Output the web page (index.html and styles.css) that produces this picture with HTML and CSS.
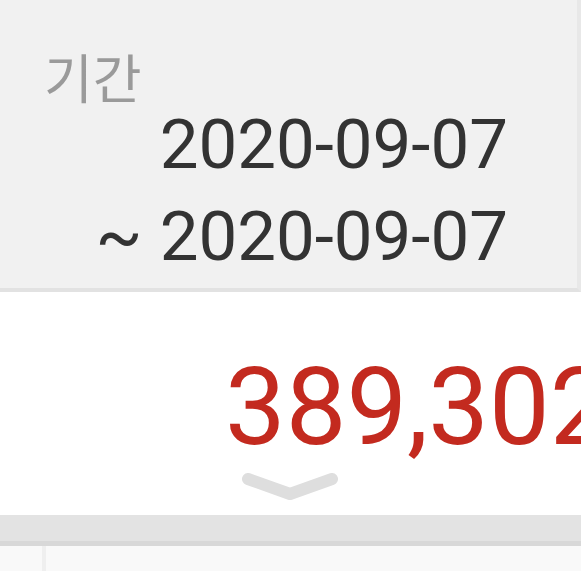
FILE: index.html
```html
<!DOCTYPE html>
<html lang="ko">
<head>
<meta charset="utf-8">
<link rel="stylesheet" href="styles.css">
</head>
<body>
<div class="screen">
  <section class="period">
    <div class="label">기간</div>
    <div class="dates">
      <div class="date">2020-09-07</div>
      <div class="date">~ 2020-09-07</div>
    </div>
  </section>
  <section class="amount">
    <div class="value">389,302원</div>
    <svg class="chevron" width="96" height="28" viewBox="0 0 96 28">
      <path d="M6 6 L48 21 L90 6" fill="none" stroke="#dedede" stroke-width="12" stroke-linecap="round" stroke-linejoin="round"/>
    </svg>
  </section>
  <div class="band"></div>
  <div class="list">
    <div class="list-side"></div>
    <div class="list-main"></div>
  </div>
</div>
</body>
</html>
```
FILE: styles.css
```css
html, body {
  margin: 0;
  padding: 0;
  background: #ffffff;
}
.screen {
  width: 581px;
  height: 571px;
  overflow: hidden;
  display: flex;
  flex-direction: column;
  font-family: Roboto, "Noto Sans CJK KR", sans-serif;
}
.period {
  box-sizing: border-box;
  height: 292px;
  flex: none;
  background: #f1f1f1;
  border-bottom: 4px solid #e2e2e2;
  border-right: 4px solid #e8e8e8;
  padding: 46px 69px 0 44px;
  display: flex;
  flex-direction: column;
}
.label {
  font-family: "Noto Sans CJK KR", sans-serif;
  font-size: 53px;
  line-height: 60px;
  color: #9a9a9a;
}
.dates {
  align-self: flex-end;
  text-align: right;
  margin-top: -7px;
}
.date {
  font-size: 69px;
  line-height: 92px;
  color: #333333;
  white-space: nowrap;
}
.amount {
  box-sizing: border-box;
  height: 223px;
  flex: none;
  background: #ffffff;
  padding: 50px 0 0 225px;
}
.value {
  font-size: 108px;
  line-height: 130px;
  color: #c32a1f;
  white-space: nowrap;
}
.chevron {
  display: block;
  margin: 1px 0 0 17px;
}
.band {
  box-sizing: border-box;
  flex: none;
  height: 31px;
  background: #e3e3e3;
  border-bottom: 5px solid #d8d8d8;
}
.list {
  flex: 1;
  display: flex;
  background: #f9f9f9;
}
.list-side {
  width: 42px;
  border-right: 4px solid #efefef;
}
.list-main {
  flex: 1;
}
```
